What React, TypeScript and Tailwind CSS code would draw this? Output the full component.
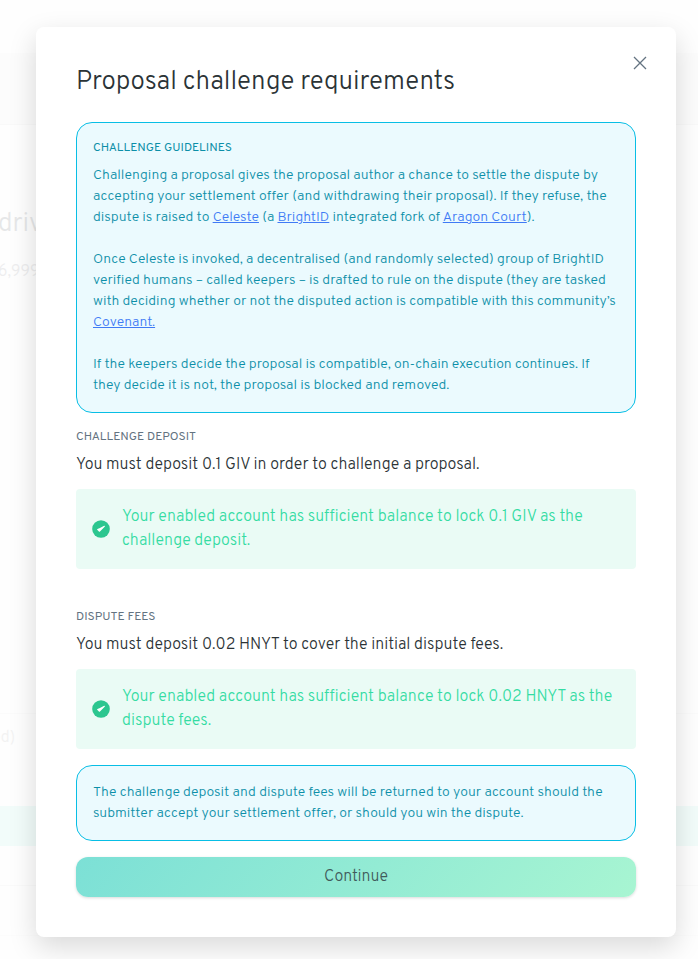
import type { ReactNode } from 'react'

function Label({ children, className }: { children: ReactNode; className: string }) {
  return <h2 className={`mb-2 text-[12px] leading-[18px] font-normal uppercase ${className}`}>{children}</h2>
}

function InfoBox({ children }: { children: ReactNode }) {
  return (
    <div className="rounded-2xl border border-[#08bee5] bg-[#ebfafe] p-4 text-[14px] leading-[21px] font-light text-[#0c8fa8]">
      {children}
    </div>
  )
}

function InfoLink({ children }: { children: ReactNode }) {
  return (
    <a href="#" className="text-[#407af5] underline">
      {children}
    </a>
  )
}

function CheckIcon() {
  return (
    <svg viewBox="0 0 18 18" className="size-[18px] shrink-0" aria-hidden="true">
      <circle cx="9" cy="9" r="8.8" fill="#2cc68f" />
      <path d="M4.9 9.6Q5.8 8.5 7.4 8.3L12.2 5.8Q13.2 5.7 12.9 6.6L8 11.5Q7.2 12.2 6.7 11.2Z" fill="#fff" />
    </svg>
  )
}

function Requirement({ label, text, status }: { label: string; text: string; status: string }) {
  return (
    <section>
      <Label className="text-[#637381]">{label}</Label>
      <p className="mb-[13px] text-[16px] leading-[22px] font-light text-[#2b3336]">{text}</p>
      <div className="flex items-center gap-3 rounded bg-[#eafbf5] p-4">
        <CheckIcon />
        <p className="text-[16px] leading-6 font-light text-[#35dca3]">{status}</p>
      </div>
    </section>
  )
}

function Backdrop() {
  return (
    <div className="absolute inset-0 flex flex-col overflow-hidden" aria-hidden="true">
      <div className="h-[53px] shrink-0" />
      <div className="h-[72px] shrink-0 border-b border-[#f9f9f9] bg-[#fcfcfc]" />
      <div className="h-[588px] shrink-0 pt-[82px] text-[#e6e7e8]">
        <p className="-ml-0.5 text-[26px] leading-9 font-light">driv</p>
        <p className="-ml-0.5 pt-[17px] text-[16px] leading-6 font-light text-[#ededee]">6,999</p>
      </div>
      <div className="h-[93px] shrink-0 border-t border-[#fbfbfb] pt-3 text-[16px] leading-6 font-light text-[#f2f2f2]">
        <p className="-ml-2">ed)</p>
      </div>
      <div className="h-10 shrink-0 bg-[#f2fcfa]" />
      <div className="h-10 shrink-0 border-b border-[#fafafa]" />
      <div className="h-[50px] shrink-0 border-b border-[#fcfcfc]" />
    </div>
  )
}

export default function App() {
  return (
    <div className="relative overflow-hidden bg-[#fefefe] pt-[27px] pr-[22px] pb-[22px] pl-9 font-['Overpass','Roboto',sans-serif]">
      <Backdrop />
      <main
        role="dialog"
        aria-labelledby="dialog-title"
        className="relative rounded-lg bg-white p-10 shadow-[0_10px_28px_rgba(0,0,0,0.15)]"
      >
        <button
          type="button"
          aria-label="Close"
          className="absolute top-6 right-6 flex size-6 items-center justify-center text-[#637381]"
        >
          <svg viewBox="0 0 14 14" className="size-[14px]" fill="none" stroke="currentColor" strokeWidth="1.3">
            <path d="M1 1 13 13M13 1 1 13" />
          </svg>
        </button>
        <h1 id="dialog-title" className="mb-6 text-[26px] leading-[31px] font-light text-[#2b3336]">
          Proposal challenge requirements
        </h1>
        <InfoBox>
          <Label className="text-[#0c8fa8]">Challenge guidelines</Label>
          <p>
            Challenging a proposal gives the proposal author a chance to settle the dispute by accepting your
            settlement offer (and withdrawing their proposal). If they refuse, the dispute is raised to{' '}
            <InfoLink>Celeste</InfoLink> (a <InfoLink>BrightID</InfoLink> integrated fork of{' '}
            <InfoLink>Aragon Court</InfoLink>).
          </p>
          <p className="mt-[21px]">
            Once Celeste is invoked, a decentralised (and randomly selected) group of BrightID verified humans –
            called keepers – is drafted to rule on the dispute (they are tasked with deciding whether or not the
            disputed action is compatible with this community’s <InfoLink>Covenant.</InfoLink>
          </p>
          <p className="mt-[21px]">
            If the keepers decide the proposal is compatible, on-chain execution continues. If they decide it is
            not, the proposal is blocked and removed.
          </p>
        </InfoBox>
        <div className="mt-[15px] mb-4 flex flex-col gap-[39px]">
          <Requirement
            label="Challenge deposit"
            text="You must deposit 0.1 GIV in order to challenge a proposal."
            status="Your enabled account has sufficient balance to lock 0.1 GIV as the challenge deposit."
          />
          <Requirement
            label="Dispute fees"
            text="You must deposit 0.02 HNYT to cover the initial dispute fees."
            status="Your enabled account has sufficient balance to lock 0.02 HNYT as the dispute fees."
          />
        </div>
        <InfoBox>
          <p>
            The challenge deposit and dispute fees will be returned to your account should the submitter accept
            your settlement offer, or should you win the dispute.
          </p>
        </InfoBox>
        <button
          type="button"
          className="mt-4 block h-10 w-full rounded-xl bg-[linear-gradient(130deg,#7ce0d6,#a8f5d2)] text-[16px] font-light text-[#415b5b] shadow-[0_1px_3px_rgba(0,0,0,0.15)]"
        >
          Continue
        </button>
      </main>
    </div>
  )
}
